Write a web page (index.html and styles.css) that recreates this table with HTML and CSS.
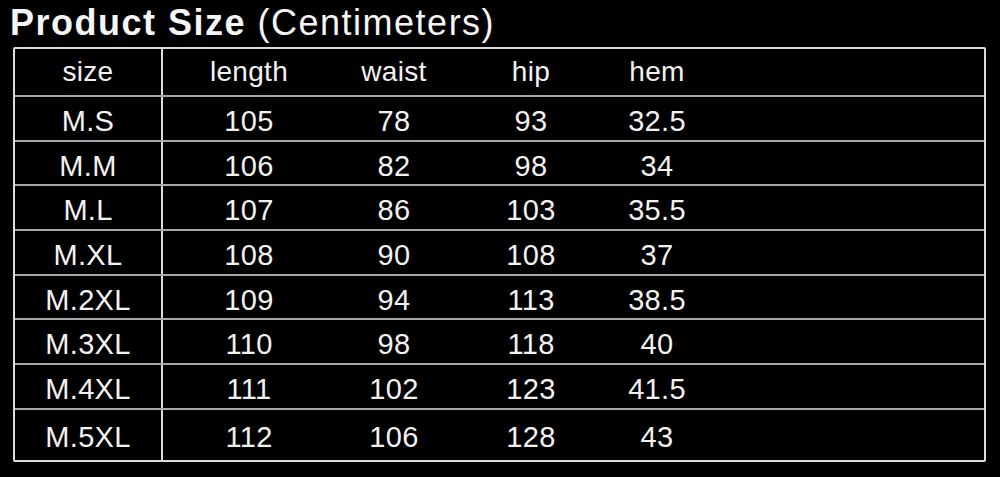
FILE: index.html
```html
<!DOCTYPE html>
<html lang="en">
<head>
<meta charset="utf-8">
<title>Product Size</title>
<link rel="stylesheet" href="styles.css">
</head>
<body>
<div class="page">
  <h1 class="title"><strong>Product Size</strong> <span class="unit">(Centimeters)</span></h1>
  <div class="table">
    <div class="row head"><div class="cell first">size</div><div class="cell">length</div><div class="cell">waist</div><div class="cell">hip</div><div class="cell">hem</div><div class="cell"></div></div>
    <div class="row"><div class="cell first">M.S</div><div class="cell">105</div><div class="cell">78</div><div class="cell">93</div><div class="cell">32.5</div><div class="cell"></div></div>
    <div class="row"><div class="cell first">M.M</div><div class="cell">106</div><div class="cell">82</div><div class="cell">98</div><div class="cell">34</div><div class="cell"></div></div>
    <div class="row"><div class="cell first">M.L</div><div class="cell">107</div><div class="cell">86</div><div class="cell">103</div><div class="cell">35.5</div><div class="cell"></div></div>
    <div class="row"><div class="cell first">M.XL</div><div class="cell">108</div><div class="cell">90</div><div class="cell">108</div><div class="cell">37</div><div class="cell"></div></div>
    <div class="row"><div class="cell first">M.2XL</div><div class="cell">109</div><div class="cell">94</div><div class="cell">113</div><div class="cell">38.5</div><div class="cell"></div></div>
    <div class="row"><div class="cell first">M.3XL</div><div class="cell">110</div><div class="cell">98</div><div class="cell">118</div><div class="cell">40</div><div class="cell"></div></div>
    <div class="row"><div class="cell first">M.4XL</div><div class="cell">111</div><div class="cell">102</div><div class="cell">123</div><div class="cell">41.5</div><div class="cell"></div></div>
    <div class="row"><div class="cell first">M.5XL</div><div class="cell">112</div><div class="cell">106</div><div class="cell">128</div><div class="cell">43</div><div class="cell"></div></div>
  </div>
</div>
</body>
</html>
```
FILE: styles.css
```css
html, body {
  margin: 0;
  padding: 0;
  background: #000;
}
.page {
  width: 1000px;
  height: 477px;
  background: #000;
  color: #f2f2f2;
  font-family: "Liberation Sans", Arial, sans-serif;
  padding-top: 3px;
  box-sizing: border-box;
}
.title {
  margin: 0 0 4px 10px;
  font-size: 36px;
  line-height: 40px;
  font-weight: normal;
  letter-spacing: 1.5px;
  color: #f5f5f5;
}
.title strong {
  font-weight: bold;
}
.table {
  margin-left: 13px;
  width: 973px;
  height: 415px;
  box-sizing: border-box;
  border: 2px solid #dcdcdc;
  border-radius: 2px;
  display: grid;
  grid-template-rows: 46px repeat(7, 44.7px) 1fr;
}
.row {
  display: grid;
  grid-template-columns: 148px 172px 118px 156px 96px 1fr;
  border-top: 2px solid #a8a8a8;
  font-size: 29px;
  letter-spacing: 0.3px;
}
.row.head {
  border-top: none;
  font-size: 28px;
}
.cell {
  text-align: center;
  display: flex;
  align-items: center;
  justify-content: center;
  padding-top: 6px;
  box-sizing: border-box;
}
.row.head .cell {
  padding-top: 0;
}
.cell.first {
  border-right: 2px solid #dcdcdc;
}
```
